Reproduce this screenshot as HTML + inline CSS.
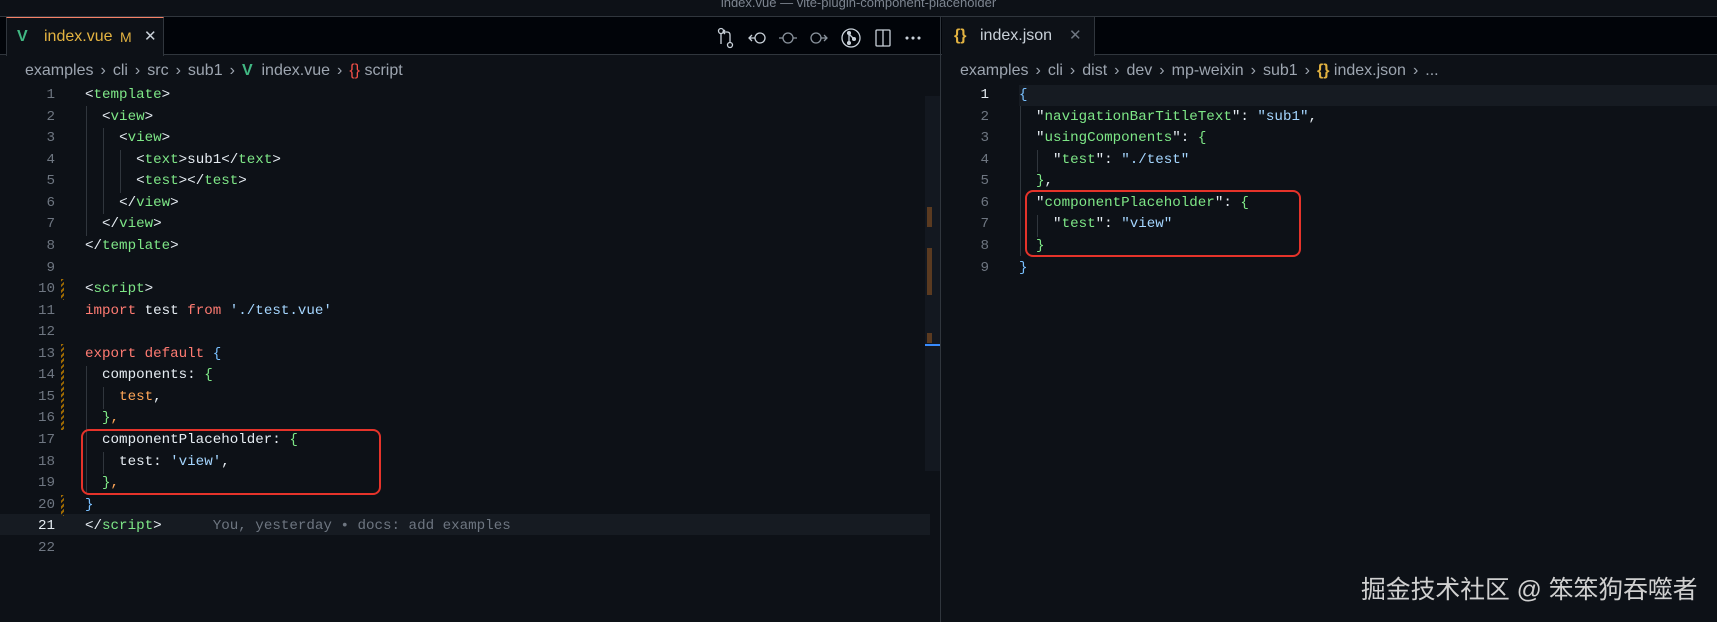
<!DOCTYPE html>
<html><head><meta charset="utf-8"><style>
*{margin:0;padding:0;box-sizing:border-box}
body{width:1717px;height:622px;background:#0d1117;overflow:hidden;position:relative;font-family:"Liberation Sans",sans-serif;color:#e6edf3}
.abs{position:absolute}
.title{left:0;top:0;width:1717px;height:17px;background:#0d1117;border-bottom:1px solid #30363d;color:#7d8590;font-size:13px;text-align:center;line-height:6px;overflow:hidden}
.tabbar{top:17px;height:38px;background:#010409;border-bottom:1px solid #30363d}
.tab{top:17px;height:39px;background:#0d1117;border-right:1px solid #30363d;font-size:16px;line-height:38px}
.crumb{font-size:16px;color:#9da5b0;top:61px;line-height:20px;white-space:pre}
.crumb i{font-style:normal;margin:0 7px;display:inline-block}
.code{font-family:"Liberation Mono",monospace;font-size:14.2px;line-height:21.57px;white-space:pre}
.ln{font-family:"Liberation Mono",monospace;font-size:14.2px;line-height:21.57px;text-align:right;color:#6e7681;white-space:pre}
.g{color:#7ee787}.w{color:#e6edf3}.k{color:#ff7b72}.s{color:#a5d6ff}.b{color:#79c0ff}.o{color:#ffa657}
.box{border:2px solid #e5332a;border-radius:8px}
.guide{width:1px;background:#30363d}
</style></head><body>
<div class="abs title">index.vue — vite-plugin-component-placeholder</div>
<!-- left pane -->
<div class="abs tabbar" style="left:0;width:940px"></div>
<div class="abs tab" style="left:6px;width:158px;border-top:1px solid #f78166;border-left:1px solid #30363d">
 <span style="position:absolute;left:10px;color:#41b883;font-weight:bold;font-size:16px">V</span>
 <span style="position:absolute;left:37px;color:#e3b341">index.vue</span>
 <span style="position:absolute;left:113px;color:#e3b341;font-size:14px">M</span>
 <span style="position:absolute;left:137px;color:#c9d1d9;font-size:15px">✕</span>
</div>
<svg class="abs" style="left:712px;top:26px" width="220" height="24" fill="none" stroke="#c9d1d9" stroke-width="1.3">
 <circle cx="9" cy="5" r="2.5"/><circle cx="18" cy="19" r="2.5"/><path d="M9 8v10M18 16V9q0-3-3-3h-3M13 4l-2 2 2 2"/>
 <circle cx="48" cy="12" r="5"/><path d="M43 12h-6M40 9l-3 3 3 3"/>
 <circle cx="76" cy="12" r="5" stroke="#8b949e"/><path d="M67 12h4M81 12h4" stroke="#8b949e"/>
 <circle cx="104" cy="12" r="5" stroke="#8b949e"/><path d="M109 12h6M112 9l3 3-3 3" stroke="#8b949e"/>
 <circle cx="139" cy="12" r="9"/><path d="M137 6v12M137 8l5 5"/><circle cx="137" cy="7" r="1.4" fill="#c9d1d9"/><circle cx="137" cy="17" r="1.4" fill="#c9d1d9"/><circle cx="142" cy="13" r="1.4" fill="#c9d1d9"/>
 <rect x="164" y="4" width="14" height="16" rx="1"/><path d="M171 4v16"/>
 <circle cx="195" cy="12" r=".9" fill="#c9d1d9"/><circle cx="201" cy="12" r=".9" fill="#c9d1d9"/><circle cx="207" cy="12" r=".9" fill="#c9d1d9"/>
</svg>
<div class="abs crumb" style="left:25px">examples<i>›</i>cli<i>›</i>src<i>›</i>sub1<i>›</i><b style="color:#41b883">V</b>  index.vue<i>›</i><span style="color:#f85149">{}</span> script</div>
<div class="abs" style="left:0;top:514px;width:930px;height:21px;background:#161b22"></div>
<div class="abs ln" style="left:0;top:85px;width:55px">1
2
3
4
5
6
7
8
9
10
11
12
13
14
15
16
17
18
19
20
<span style="color:#e6edf3">21</span>
22</div>
<div class="abs" style="left:61px;top:279px;width:3px;height:21px;background:repeating-linear-gradient(135deg,#9e6a03 0 2px,transparent 2px 4px)"></div>
<div class="abs" style="left:61px;top:344px;width:3px;height:86px;background:repeating-linear-gradient(135deg,#9e6a03 0 2px,transparent 2px 4px)"></div>
<div class="abs" style="left:61px;top:495px;width:3px;height:21px;background:repeating-linear-gradient(135deg,#9e6a03 0 2px,transparent 2px 4px)"></div>
<div class="abs guide" style="left:86px;top:106px;height:130px"></div>
<div class="abs guide" style="left:103px;top:128px;height:86px"></div>
<div class="abs guide" style="left:120px;top:150px;height:43px"></div>
<div class="abs guide" style="left:86px;top:366px;height:128px"></div>
<div class="abs guide" style="left:103px;top:387px;height:22px"></div>
<div class="abs guide" style="left:103px;top:452px;height:22px"></div>
<div class="abs code" style="left:85px;top:85px"><span class="w">&lt;</span><span class="g">template</span><span class="w">&gt;</span>
  <span class="w">&lt;</span><span class="g">view</span><span class="w">&gt;</span>
    <span class="w">&lt;</span><span class="g">view</span><span class="w">&gt;</span>
      <span class="w">&lt;</span><span class="g">text</span><span class="w">&gt;sub1&lt;/</span><span class="g">text</span><span class="w">&gt;</span>
      <span class="w">&lt;</span><span class="g">test</span><span class="w">&gt;&lt;/</span><span class="g">test</span><span class="w">&gt;</span>
    <span class="w">&lt;/</span><span class="g">view</span><span class="w">&gt;</span>
  <span class="w">&lt;/</span><span class="g">view</span><span class="w">&gt;</span>
<span class="w">&lt;/</span><span class="g">template</span><span class="w">&gt;</span>

<span class="w">&lt;</span><span class="g">script</span><span class="w">&gt;</span>
<span class="k">import</span> test <span class="k">from</span> <span class="s">'./test.vue'</span>

<span class="k">export default</span> <span class="b">{</span>
  components: <span class="g">{</span>
    <span class="o">test</span>,
  <span class="g">}</span><span class="o">,</span>
  componentPlaceholder: <span class="g">{</span>
    test: <span class="s">'view'</span>,
  <span class="g">}</span><span class="o">,</span>
<span class="b">}</span>
<span class="w">&lt;/</span><span class="g">script</span><span class="w">&gt;</span>      <span style="color:#6e7681">You, yesterday • docs: add examples</span>
</div>
<div class="abs box" style="left:81px;top:429px;width:300px;height:66px"></div>
<div class="abs" style="left:925px;top:96px;width:15px;height:375px;background:#131820"></div>
<div class="abs" style="left:927px;top:207px;width:5px;height:20px;background:#5a3a20"></div>
<div class="abs" style="left:927px;top:248px;width:5px;height:47px;background:#5a3a20"></div>
<div class="abs" style="left:927px;top:333px;width:5px;height:10px;background:#5a3a20"></div>
<div class="abs" style="left:925px;top:344px;width:15px;height:2px;background:#388bfd"></div>
<div class="abs" style="left:940px;top:17px;width:1px;height:605px;background:#30363d"></div>
<!-- right pane -->
<div class="abs tabbar" style="left:941px;width:776px"></div>
<div class="abs tab" style="left:942px;width:153px">
 <span style="position:absolute;left:12px;color:#e3b341;font-weight:bold">{}</span>
 <span style="position:absolute;left:38px;color:#c9d1d9">index.json</span>
 <span style="position:absolute;left:127px;color:#6e7681;font-size:15px">✕</span>
</div>
<div class="abs crumb" style="left:960px">examples<i>›</i>cli<i>›</i>dist<i>›</i>dev<i>›</i>mp-weixin<i>›</i>sub1<i>›</i><b style="color:#e3b341">{}</b> index.json<i>›</i>...</div>
<div class="abs" style="left:1019px;top:85px;width:698px;height:21px;background:#161b22"></div>
<div class="abs ln" style="left:941px;top:85px;width:48px"><span style="color:#e6edf3">1</span>
2
3
4
5
6
7
8
9</div>
<div class="abs guide" style="left:1020px;top:106px;height:150px"></div>
<div class="abs guide" style="left:1037px;top:150px;height:22px"></div>
<div class="abs guide" style="left:1037px;top:215px;height:22px"></div>
<div class="abs code" style="left:1019px;top:85px"><span class="b">{</span>
  "<span class="g">navigationBarTitleText</span>": <span class="s">"sub1"</span>,
  "<span class="g">usingComponents</span>": <span class="g">{</span>
    "<span class="g">test</span>": <span class="s">"./test"</span>
  <span class="g">}</span>,
  "<span class="g">componentPlaceholder</span>": <span class="g">{</span>
    "<span class="g">test</span>": <span class="s">"view"</span>
  <span class="g">}</span>
<span class="b">}</span></div>
<div class="abs box" style="left:1025px;top:190px;width:276px;height:67px"></div>
<div class="abs" style="left:1361px;top:570px;font-family:'Liberation Sans','Noto Sans CJK SC',sans-serif;font-size:24.8px;color:#d0d0d0;white-space:nowrap">掘金技术社区 @ 笨笨狗吞噬者</div>
</body></html>
